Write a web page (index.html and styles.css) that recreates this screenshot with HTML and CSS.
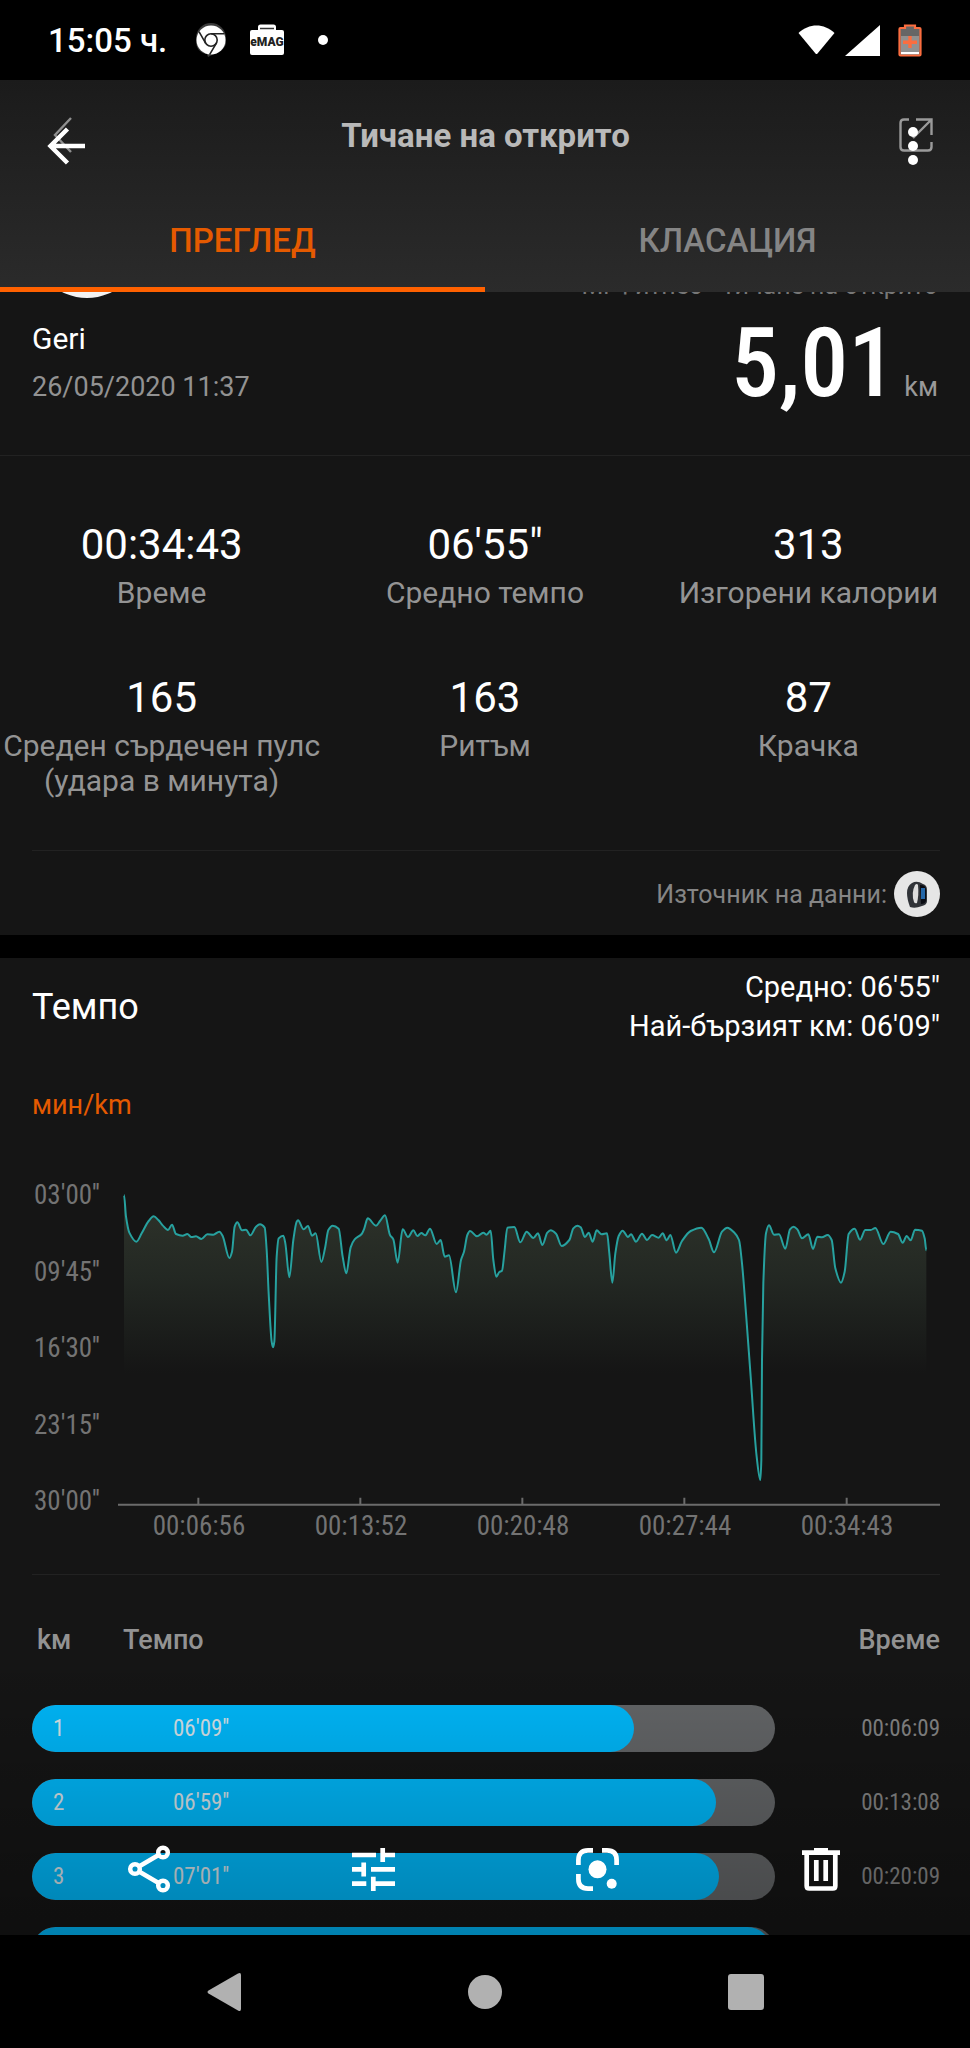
FILE: index.html
```
<!DOCTYPE html>
<html lang="bg">
<head>
    <meta charset="UTF-8">
    <meta name="viewport" content="width=device-width, initial-scale=1.0">
    <title>Тичане на открито</title>
    <link rel="stylesheet" href="styles.css">
</head>
<body>
    <div class="status-bar">
        <span class="clock">15:05 ч.</span>
        <svg class="status-icon" width="36" height="36" viewBox="0 0 36 36">
            <path d="M3 16a15 15 0 0 1 30 0v6c-2 5-6 9-12 10l-6 3-1-3C6 31 3 25 3 19z" fill="#3a3a3a"/>
            <circle cx="18" cy="18" r="14.5" fill="#fff"/>
            <g fill="none" stroke="#222" stroke-width="1.6">
                <circle cx="18" cy="18" r="6.2"/>
                <path d="M18 11.8h13.2M12.6 21.1 6 9.7M23.4 21.1 16.6 32.6"/>
            </g>
        </svg>
        <svg class="status-icon" width="34" height="32" viewBox="0 0 34 32">
            <path d="M8 6V3a2.500 2.500 0 0 1 2.500-2.500h13A2.500 2.500 0 0 1 26 3v3" fill="#fff"/>
            <path d="M10 4.500h14" stroke="#333" stroke-width="1.500"/>
            <rect y="6" width="34" height="25" rx="2" fill="#fff"/>
            <text class="emag" x="17" y="22" text-anchor="middle">eMAG</text>
        </svg>
        <span class="more-dot"></span>
        <span class="spacer"></span>
        <svg width="37" height="30" viewBox="0 0 37 30"><path d="M0.500 8C11-2 26-2 36.500 8L19.500 28.500q-1 1-2 0z" fill="#fff"/></svg>
        <svg class="signal" width="35" height="31" viewBox="0 0 35 31"><path d="M0 31 35 0v31z" fill="#fff"/></svg>
        <svg width="24" height="33" viewBox="0 0 24 33">
            <path d="M7 1.500h10V4h4.500q1 0 1 1v25.500q0 1-1 1h-19q-1 0-1-1V5q0-1 1-1H7z" fill="#666" stroke="#fb6d3f" stroke-width="2.200"/>
            <path d="M3 12h18v16H3z" fill="#919191"/>
            <path d="M3 28h18v2.200H3z" fill="#fff"/>
            <path d="M12 12v12M5 18.300h14" stroke="#fb6d3f" stroke-width="3.400"/>
        </svg>
    </div>

    <div class="screen">
        <header class="app-header">
            <div class="title-row">
                <button class="icon-button" aria-label="Назад">
                    <svg width="19" height="36" viewBox="0 0 19 36" fill="none" stroke="#8f8f8f" stroke-width="2.400"><path d="M18 1 2 18l16 17"/></svg>
                </button>
                <h1>Тичане на открито</h1>
                <button class="icon-button" aria-label="Сподели">
                    <svg width="34" height="34" viewBox="0 0 34 34" fill="none" stroke="#9a9a9a" stroke-width="2.400"><path d="M10 1.500H5Q1.500 1.500 1.500 5v24q0 3.500 3.500 3.500h24q3.500 0 3.500-3.500v-5M17 1.500h15.500V17M32 2 14 20"/></svg>
                </button>
            </div>
            <nav class="tabs">
                <a class="tab active" href="#overview">ПРЕГЛЕД</a>
                <a class="tab" href="#ranking">КЛАСАЦИЯ</a>
            </nav>
        </header>

        <main class="content" id="overview">
            <section class="card">
                <div class="profile">
                    <div class="person">
                        <div class="avatar"></div>
                        <div class="name">Geri</div>
                        <div class="date">26/05/2020 11:37</div>
                    </div>
                    <div class="distance">
                        <div class="activity">Mi Фитнес - Тичане на открито</div>
                        <div class="distance-value"><span class="big">5,01</span><span class="unit">kм</span></div>
                    </div>
                </div>
                <div class="stats">
                    <div class="stat"><b>00:34:43</b><span>Време</span></div>
                    <div class="stat"><b>06'55"</b><span>Средно темпо</span></div>
                    <div class="stat"><b>313</b><span>Изгорени калории</span></div>
                    <div class="stat"><b>165</b><span>Среден сърдечен пулс (удара в минута)</span></div>
                    <div class="stat"><b>163</b><span>Ритъм</span></div>
                    <div class="stat"><b>87</b><span>Крачка</span></div>
                </div>
                <div class="source">
                    <span>Източник на данни:</span>
                    <svg width="46" height="46" viewBox="0 0 46 46">
                        <circle cx="23" cy="23" r="23" fill="#e6e6e6"/>
                        <path d="M18 12q5-3 11 1 4 1 4 6v11q0 4-5 5-7 3-12 1-3-8-3-14 0-7 5-10z" fill="#303338"/>
                        <path d="M21 14q-4 8-1 17 1 2 3 1 2-8 1-18-1-2-3 0z" fill="#ddd"/>
                        <path d="M26 14q6 0 6 5v11q-1 3-5 3z" fill="#090b12"/>
                        <path d="M27 17h4v11h-4z" fill="#2467a8"/>
                    </svg>
                </div>
            </section>

            <section class="card">
                <div class="pace-head">
                    <h2>Темпо</h2>
                    <div class="pace-summary">
                        <div>Средно: 06'55"</div>
                        <div>Най-бързият км: 06'09"</div>
                    </div>
                </div>
                <div class="pace-unit">мин/km</div>
                <div class="chart">
                    <div class="y-axis">
                        <span>03'00''</span>
                        <span>09'45''</span>
                        <span>16'30''</span>
                        <span>23'15''</span>
                        <span>30'00''</span>
                    </div>
                    <div class="plot">
                        <svg class="plot-svg" viewBox="354 60 2466 978" preserveAspectRatio="none">
                            <defs>
                                <linearGradient id="area-fill" gradientUnits="userSpaceOnUse" x1="0" y1="160" x2="0" y2="640">
                                    <stop offset="0" stop-color="#2c3129"/>
                                    <stop offset="0.400" stop-color="#232823"/>
                                    <stop offset="1" stop-color="#151515"/>
                                </linearGradient>
                            </defs>
                            <path id="area" fill="url(#area-fill)"/>
                            <path id="line" class="pace-line"/>
                            <path class="axis-line" d="M354 1034H2820M595 1034v-21M1081 1034v-21M1567 1034v-21M2053 1034v-21M2540 1034v-21"/>
                        </svg>
                        <div class="x-axis">
                            <span>00:06:56</span>
                            <span>00:13:52</span>
                            <span>00:20:48</span>
                            <span>00:27:44</span>
                            <span>00:34:43</span>
                        </div>
                    </div>
                </div>

                <table class="splits">
                    <thead>
                        <tr><th class="km">kм</th><th class="pace">Темпо</th><th class="time">Време</th></tr>
                    </thead>
                    <tbody>
                        <tr>
                            <td colspan="2"><div class="bar"><div class="fill" style="width: 81%"></div><span class="km">1</span><span class="pace">06'09''</span></div></td>
                            <td class="time">00:06:09</td>
                        </tr>
                        <tr>
                            <td colspan="2"><div class="bar"><div class="fill" style="width: 92%"></div><span class="km">2</span><span class="pace">06'59''</span></div></td>
                            <td class="time">00:13:08</td>
                        </tr>
                        <tr>
                            <td colspan="2"><div class="bar"><div class="fill" style="width: 92.500%"></div><span class="km">3</span><span class="pace">07'01''</span></div></td>
                            <td class="time">00:20:09</td>
                        </tr>
                        <tr>
                            <td colspan="2"><div class="bar"><div class="fill" style="width: 99.500%"></div></div></td>
                            <td class="time"></td>
                        </tr>
                    </tbody>
                </table>
            </section>
        </main>

        <!-- photo viewer controls over the app -->
        <div class="viewer-top">
            <button class="icon-button" aria-label="Назад">
                <svg width="38" height="38" viewBox="0 0 38 38" fill="none" stroke="#fff" stroke-width="4.500"><path d="M38 19H4M20.500 2 3.500 19l17 17"/></svg>
            </button>
            <button class="icon-button" aria-label="Още">
                <svg width="10" height="38" viewBox="0 0 10 38" fill="#fff"><circle cx="5" cy="5" r="5"/><circle cx="5" cy="19" r="5"/><circle cx="5" cy="33" r="5"/></svg>
            </button>
        </div>
        <div class="viewer-bottom">
            <button class="icon-button" aria-label="Споделяне">
                <svg width="44" height="48" viewBox="0 0 44 48" fill="none" stroke="#fff" stroke-width="4.500"><circle cx="8" cy="24" r="4.800"/><circle cx="36" cy="7.500" r="4.800"/><circle cx="36" cy="40.500" r="4.800"/><path d="m12 21.500 20-11.700M12 26.500l20 11.700"/></svg>
            </button>
            <button class="icon-button" aria-label="Редактиране">
                <svg width="43" height="43" viewBox="0 0 43 43" fill="none" stroke="#fff" stroke-width="4.700"><path d="M0 7h24M30.700 0v14M30.700 7H43M0 21.300h11.700M11.700 14.500v14M19 21.300h24M0 35.700h14.300M21.300 28.700V43M21.300 35.700H43"/></svg>
            </button>
            <button class="icon-button" aria-label="Обектив">
                <svg width="43" height="43" viewBox="0 0 43 43" fill="none" stroke="#fff" stroke-width="4.700"><path d="M2.400 17v-5q0-9.600 9.600-9.600h5M26 2.400h5q9.600 0 9.600 9.600v5M2.400 26v5q0 9.600 9.600 9.600h5"/><g fill="#fff" stroke="none"><circle cx="21.500" cy="21.300" r="9"/><circle cx="35.700" cy="35.700" r="5"/></g></svg>
            </button>
            <button class="icon-button" aria-label="Изтриване">
                <svg width="38" height="43" viewBox="0 0 38 43" fill="none" stroke="#fff" stroke-width="4.700"><path d="M0 4.700h38M12 2h14M4.700 5v33q0 2.500 2.500 2.500h23.600q2.500 0 2.500-2.500V5M14.300 12v21M23.700 12v21"/></svg>
            </button>
        </div>
    </div>

    <div class="nav-bar">
        <button class="icon-button" aria-label="Back"><svg width="34" height="40" viewBox="0 0 34 40"><path d="M31 1.500Q34 0 34 3v34q0 3-3 1.500L1.500 21.500q-2-1.500 0-3z" fill="#b1b1b1"/></svg></button>
        <button class="icon-button" aria-label="Home"><svg width="34" height="34" viewBox="0 0 34 34"><circle cx="17" cy="17" r="17" fill="#b1b1b1"/></svg></button>
        <button class="icon-button" aria-label="Recents"><svg width="36" height="36" viewBox="0 0 36 36"><rect width="36" height="36" rx="3" fill="#b1b1b1"/></svg></button>
    </div>

    <script src="chart.js"></script>
</body>
</html>
```

FILE: styles.css
```
* {
    box-sizing: border-box;
}

body {
    display: flex;
    flex-direction: column;
    height: 100vh;
    margin: 0;
    background: #000;
    color: #fff;
    font-family: Roboto, "Noto Sans", sans-serif;
    overflow: hidden;
}

svg {
    display: block;
}

.icon-button {
    display: flex;
    padding: 0;
    border: 0;
    background: none;
}

/* status bar */
.status-bar {
    display: flex;
    flex: none;
    align-items: center;
    height: 80px;
    padding: 0 48px;
}

.clock {
    font-size: 33px;
    font-weight: 500;
}

.status-icon {
    margin-left: 26px;
}

.clock + .status-icon {
    margin-right: -5px;
}

.emag {
    font-family: Roboto, sans-serif;
    font-size: 12px;
    font-weight: 900;
    fill: #222;
}

.more-dot {
    width: 10px;
    height: 10px;
    margin-left: 34px;
    border-radius: 50%;
    background: #fff;
}

.spacer {
    flex: 1;
}

.signal {
    margin: 0 18px 0 10px;
}

/* app */
.screen {
    position: relative;
    display: flex;
    flex: 1;
    flex-direction: column;
    min-height: 0;
}

.app-header {
    position: relative;
    z-index: 1;
    flex: none;
    background: linear-gradient(#1b1b1b, #2b2b2b);
}

.title-row {
    display: flex;
    align-items: center;
    justify-content: space-between;
    height: 110px;
    padding: 0 37px 0 53px;
}

.title-row h1 {
    margin: 0;
    color: #b9b9b9;
    font-size: 33px;
    font-weight: 700;
}

.tabs {
    display: grid;
    grid-template-columns: 1fr 1fr;
}

.tab {
    height: 102px;
    padding-top: 31px;
    border-bottom: 5px solid transparent;
    color: #858585;
    font-size: 33px;
    font-weight: 500;
    line-height: 40px;
    text-align: center;
    text-decoration: none;
}

.tab.active {
    border-color: #ff6100;
    color: #e55a00;
}

.content {
    flex: 1;
    min-height: 0;
    overflow: hidden;
}

.card {
    background: #151515;
}

.card + .card {
    margin-top: 23px;
    padding: 10px 30px 0 32px;
}

.profile {
    display: flex;
    align-items: flex-end;
    justify-content: space-between;
    margin-top: -104px;
    padding: 0 32px 50px;
    border-bottom: 1px solid #222;
}

.avatar {
    width: 110px;
    height: 110px;
    border-radius: 50%;
    background: #f2f2f2;
}

.name {
    margin-top: 23px;
    font-size: 30px;
    line-height: 36px;
}

.date {
    margin-top: 12px;
    color: #929292;
    font-size: 27px;
    line-height: 36px;
}

.distance {
    text-align: right;
}

.activity {
    margin-bottom: 17px;
    color: #777;
    font-size: 25px;
    line-height: 36px;
}

.distance-value {
    display: flex;
    align-items: baseline;
    justify-content: flex-end;
    gap: 8px;
}

.big {
    font-family: "Roboto Condensed", "Liberation Sans Narrow", Roboto, sans-serif;
    font-size: 96px;
    font-weight: 500;
    line-height: 84px;
}

.unit {
    color: #999;
    font-size: 27px;
    line-height: 36px;
}

.stats {
    display: grid;
    grid-template-columns: repeat(3, 1fr);
    row-gap: 63px;
    padding: 64px 0 52px;
}

.stat {
    display: flex;
    flex-direction: column;
    gap: 5px;
    text-align: center;
}

.stat b {
    font-size: 42px;
    font-weight: 400;
    line-height: 50px;
}

.stat span {
    color: #949494;
    font-size: 30px;
    line-height: 35px;
}

.source {
    display: flex;
    align-items: center;
    justify-content: flex-end;
    gap: 7px;
    margin: 0 30px 0 32px;
    padding: 20px 0 18px;
    border-top: 1px solid #222;
    color: #858585;
    font-size: 25px;
}

/* pace */
.pace-head {
    display: flex;
    align-items: center;
    justify-content: space-between;
}

.pace-head h2 {
    margin: 0;
    font-size: 36px;
    font-weight: 400;
}

.pace-summary {
    font-size: 29px;
    line-height: 39px;
    text-align: right;
}

.pace-unit {
    margin: 41px 0 57px;
    color: #e55a00;
    font-size: 27px;
    line-height: 36px;
}

.chart {
    display: flex;
    padding-bottom: 30px;
    border-bottom: 1px solid #222;
    color: #737373;
    font-family: "Roboto Condensed", "Liberation Sans Narrow", Roboto, sans-serif;
}

.y-axis {
    display: flex;
    flex-direction: column;
    justify-content: space-between;
    width: 86px;
    height: 336px;
    padding-left: 2px;
    font-size: 27px;
    line-height: 30px;
}

.plot {
    flex: 1;
}

.plot-svg {
    width: 100%;
    height: 326px;
}

.pace-line {
    fill: none;
    stroke: #27a19f;
    stroke-width: 2px;
    vector-effect: non-scaling-stroke;
}

.axis-line {
    fill: none;
    stroke: #6b6b6b;
    stroke-width: 2px;
    vector-effect: non-scaling-stroke;
}

.x-axis {
    display: grid;
    grid-template-columns: repeat(5, 1fr);
    padding: 2px 12px 0 0;
    font-size: 27px;
    line-height: 36px;
    text-align: center;
}

/* splits */
.splits {
    width: 100%;
    border-collapse: collapse;
    table-layout: fixed;
}

.splits th {
    padding: 47px 0;
    color: #929292;
    font-size: 27px;
    font-weight: 500;
    line-height: 36px;
    text-align: left;
}

.splits th.km {
    width: 91px;
    padding-left: 5px;
}

.splits th.time {
    width: 165px;
    text-align: right;
}

.splits td {
    padding: 0 0 27px;
    font-family: "Roboto Condensed", "Liberation Sans Narrow", Roboto, sans-serif;
    font-size: 23px;
    line-height: 47px;
}

.splits td.time {
    color: #858585;
    text-align: right;
}

.bar {
    position: relative;
    display: flex;
    height: 47px;
    padding-left: 21px;
    border-radius: 24px;
    background: #646668;
    color: #d8e4ea;
    overflow: hidden;
}

.bar .fill {
    position: absolute;
    top: 0;
    left: 0;
    height: 100%;
    border-radius: 24px;
    background: #00b9fc;
}

.bar span {
    position: relative;
}

.bar .km {
    width: 120px;
}

/* viewer controls */
.viewer-top {
    position: absolute;
    z-index: 2;
    top: 0;
    left: 0;
    display: flex;
    align-items: center;
    justify-content: space-between;
    width: 100%;
    height: 132px;
    padding: 0 52px 0 47px;
}

.viewer-bottom {
    position: absolute;
    bottom: 0;
    left: 0;
    display: grid;
    grid-template-columns: repeat(4, 1fr);
    align-items: center;
    justify-items: center;
    width: 100%;
    height: 284px;
    padding: 152px 37px 0;
    background: linear-gradient(rgba(0, 0, 0, 0), rgba(0, 0, 0, 0.3));
}

/* system navigation */
.nav-bar {
    display: grid;
    flex: none;
    grid-template-columns: repeat(3, 1fr);
    align-items: center;
    justify-items: center;
    height: 113px;
    padding: 0 94px;
}
```

FILE: chart.js
```
const points = [
    [372,105],[378,170],[388,218],[409,245],[425,220],[446,183],[461,169],[475,180],[488,196],[504,210],
    [516,194],[528,222],[548,227],[562,222],[574,231],[588,229],[604,237],[622,223],[640,224],[658,215],
    [668,228],[688,294],[696,275],[704,200],[712,187],[726,211],[738,209],[751,226],[768,200],[780,193],
    [794,203],[800,270],[806,400],[815,545],[819,562],[823,545],[830,290],[836,235],[850,227],[856,250],
    [868,352],[880,240],[890,185],[894,181],[911,208],[924,198],[936,227],[947,220],[964,306],[975,265],
    [985,210],[998,197],[1016,206],[1028,290],[1039,340],[1052,262],[1064,238],[1085,222],[1093,205],
    [1103,175],[1128,197],[1140,183],[1155,166],[1170,225],[1180,238],[1193,308],[1208,208],[1224,231],
    [1240,211],[1252,228],[1264,219],[1276,226],[1290,206],[1310,252],[1322,240],[1334,290],[1347,286],
    [1368,397],[1383,300],[1392,275],[1402,225],[1410,213],[1431,229],[1450,218],[1460,224],[1472,212],
    [1480,300],[1489,350],[1498,336],[1506,332],[1514,270],[1522,203],[1543,201],[1561,247],[1580,215],
    [1600,234],[1614,220],[1627,255],[1642,218],[1652,211],[1668,221],[1685,258],[1708,240],[1720,205],
    [1732,197],[1742,202],[1755,231],[1766,218],[1778,245],[1790,211],[1805,223],[1821,220],[1828,280],
    [1837,368],[1846,280],[1856,228],[1868,212],[1884,231],[1893,223],[1908,245],[1926,221],[1941,240],
    [1956,225],[1976,233],[1988,220],[2000,241],[2011,225],[2028,278],[2046,243],[2072,213],[2104,203],
    [2126,237],[2142,277],[2166,215],[2182,203],[2202,217],[2217,240],[2226,310],[2238,460],[2252,650],
    [2270,890],[2281,960],[2284,900],[2286,600],[2290,370],[2298,220],[2307,196],[2322,224],[2337,223],
    [2356,266],[2370,208],[2381,200],[2392,208],[2406,235],[2425,223],[2439,267],[2452,230],[2466,232],
    [2483,225],[2495,240],[2506,325],[2523,368],[2534,335],[2546,222],[2564,206],[2580,239],[2596,210],
    [2612,210],[2626,204],[2650,252],[2672,215],[2694,222],[2708,248],[2720,228],[2732,241],[2745,209],
    [2766,212],[2774,235],[2779,271]
];

// slope at a point, flat on peaks and dips so the curve never overshoots
function slope(i) {
    if (i === 0 || i === points.length - 1) return 0;
    const [x0, y0] = points[i - 1];
    const [x1, y1] = points[i];
    const [x2, y2] = points[i + 1];
    const a = (y1 - y0) / (x1 - x0);
    const b = (y2 - y1) / (x2 - x1);
    return a * b <= 0 ? 0 : 2 * a * b / (a + b);
}

let d = 'M' + points[0].join(' ');
for (let i = 1; i < points.length; i++) {
    const [x0, y0] = points[i - 1];
    const [x1, y1] = points[i];
    const h = (x1 - x0) / 3;
    d += `C${x0 + h} ${y0 + slope(i - 1) * h} ${x1 - h} ${y1 - slope(i) * h} ${x1} ${y1}`;
}

document.getElementById('line').setAttribute('d', d);
document.getElementById('area').setAttribute('d', d + 'V640H372Z');
```
